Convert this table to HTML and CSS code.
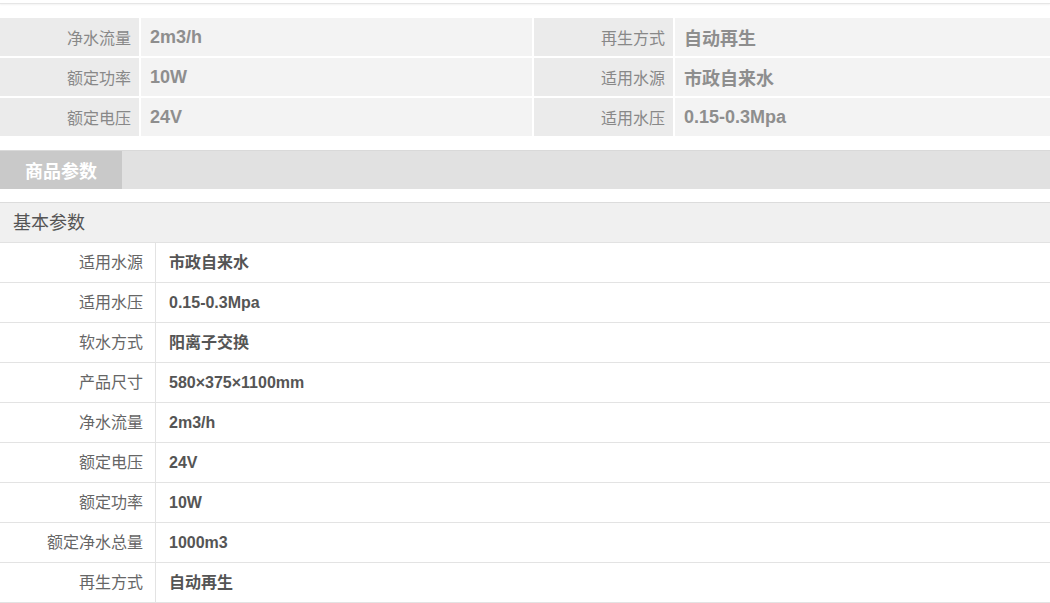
FILE: index.html
```html
<!DOCTYPE html>
<html lang="zh">
<head>
<meta charset="utf-8">
<title>商品参数</title>
<link rel="stylesheet" href="styles.css">
</head>
<body>
<div class="topline"></div>

<div class="summary">
  <div class="s-label">净水流量</div><div class="s-value">2m3/h</div>
  <div class="s-label">再生方式</div><div class="s-value">自动再生</div>
  <div class="s-label">额定功率</div><div class="s-value">10W</div>
  <div class="s-label">适用水源</div><div class="s-value">市政自来水</div>
  <div class="s-label">额定电压</div><div class="s-value">24V</div>
  <div class="s-label">适用水压</div><div class="s-value">0.15-0.3Mpa</div>
</div>

<div class="tabbar">
  <div class="tab">商品参数</div>
</div>

<div class="params">
  <div class="group-title">基本参数</div>
  <div class="row"><div class="p-label">适用水源</div><div class="p-value">市政自来水</div></div>
  <div class="row"><div class="p-label">适用水压</div><div class="p-value">0.15-0.3Mpa</div></div>
  <div class="row"><div class="p-label">软水方式</div><div class="p-value">阳离子交换</div></div>
  <div class="row"><div class="p-label">产品尺寸</div><div class="p-value">580×375×1100mm</div></div>
  <div class="row"><div class="p-label">净水流量</div><div class="p-value">2m3/h</div></div>
  <div class="row"><div class="p-label">额定电压</div><div class="p-value">24V</div></div>
  <div class="row"><div class="p-label">额定功率</div><div class="p-value">10W</div></div>
  <div class="row"><div class="p-label">额定净水总量</div><div class="p-value">1000m3</div></div>
  <div class="row"><div class="p-label">再生方式</div><div class="p-value">自动再生</div></div>
</div>
</body>
</html>
```

FILE: styles.css
```css
html, body {
  margin: 0;
  padding: 0;
  background: #ffffff;
}

body {
  font-family: "Liberation Sans", "Noto Sans CJK SC", sans-serif;
  font-size: 16px;
  width: 1050px;
  overflow: hidden;
}

.topline {
  height: 3px;
  border-bottom: 1px solid #e6e6e6;
  box-shadow: 0 1px 2px rgba(0, 0, 0, 0.05);
}

.summary {
  margin-top: 14px;
  display: grid;
  grid-template-columns: 139px 391px 139px 1fr;
  grid-auto-rows: 38px;
  gap: 2px;
}

.s-label,
.s-value {
  display: flex;
  align-items: center;
}

.s-label {
  background: #ebebeb;
  justify-content: flex-end;
  padding-right: 8px;
  color: #888;
  font-size: 16px;
}

.s-value {
  background: #f3f3f3;
  padding-left: 9px;
  color: #8e8e8e;
  font-weight: bold;
  font-size: 18px;
}

.tabbar {
  margin-top: 14px;
  border-top: 1px solid #d9d9d9;
  background: #e1e1e1;
  height: 38px;
  display: flex;
}

.tab {
  width: 122px;
  background: #c9c9c9;
  color: #ffffff;
  font-weight: bold;
  font-size: 18px;
  display: flex;
  align-items: center;
  justify-content: center;
}

.params {
  margin-top: 13px;
}

.group-title {
  height: 39px;
  border-top: 1px solid #dcdcdc;
  border-bottom: 1px solid #e2e2e2;
  background: #f0f0f0;
  color: #555;
  font-size: 18px;
  line-height: 22px;
  padding-left: 13px;
  display: flex;
  align-items: center;
}

.row {
  display: flex;
  height: 39px;
  border-bottom: 1px solid #e3e3e3;
  line-height: 20px;
}

.p-label {
  width: 143px;
  padding-right: 12px;
  border-right: 1px solid #e3e3e3;
  display: flex;
  align-items: center;
  justify-content: flex-end;
  color: #666;
}

.p-value {
  padding-left: 13px;
  display: flex;
  align-items: center;
  color: #555;
  font-weight: bold;
}
```
